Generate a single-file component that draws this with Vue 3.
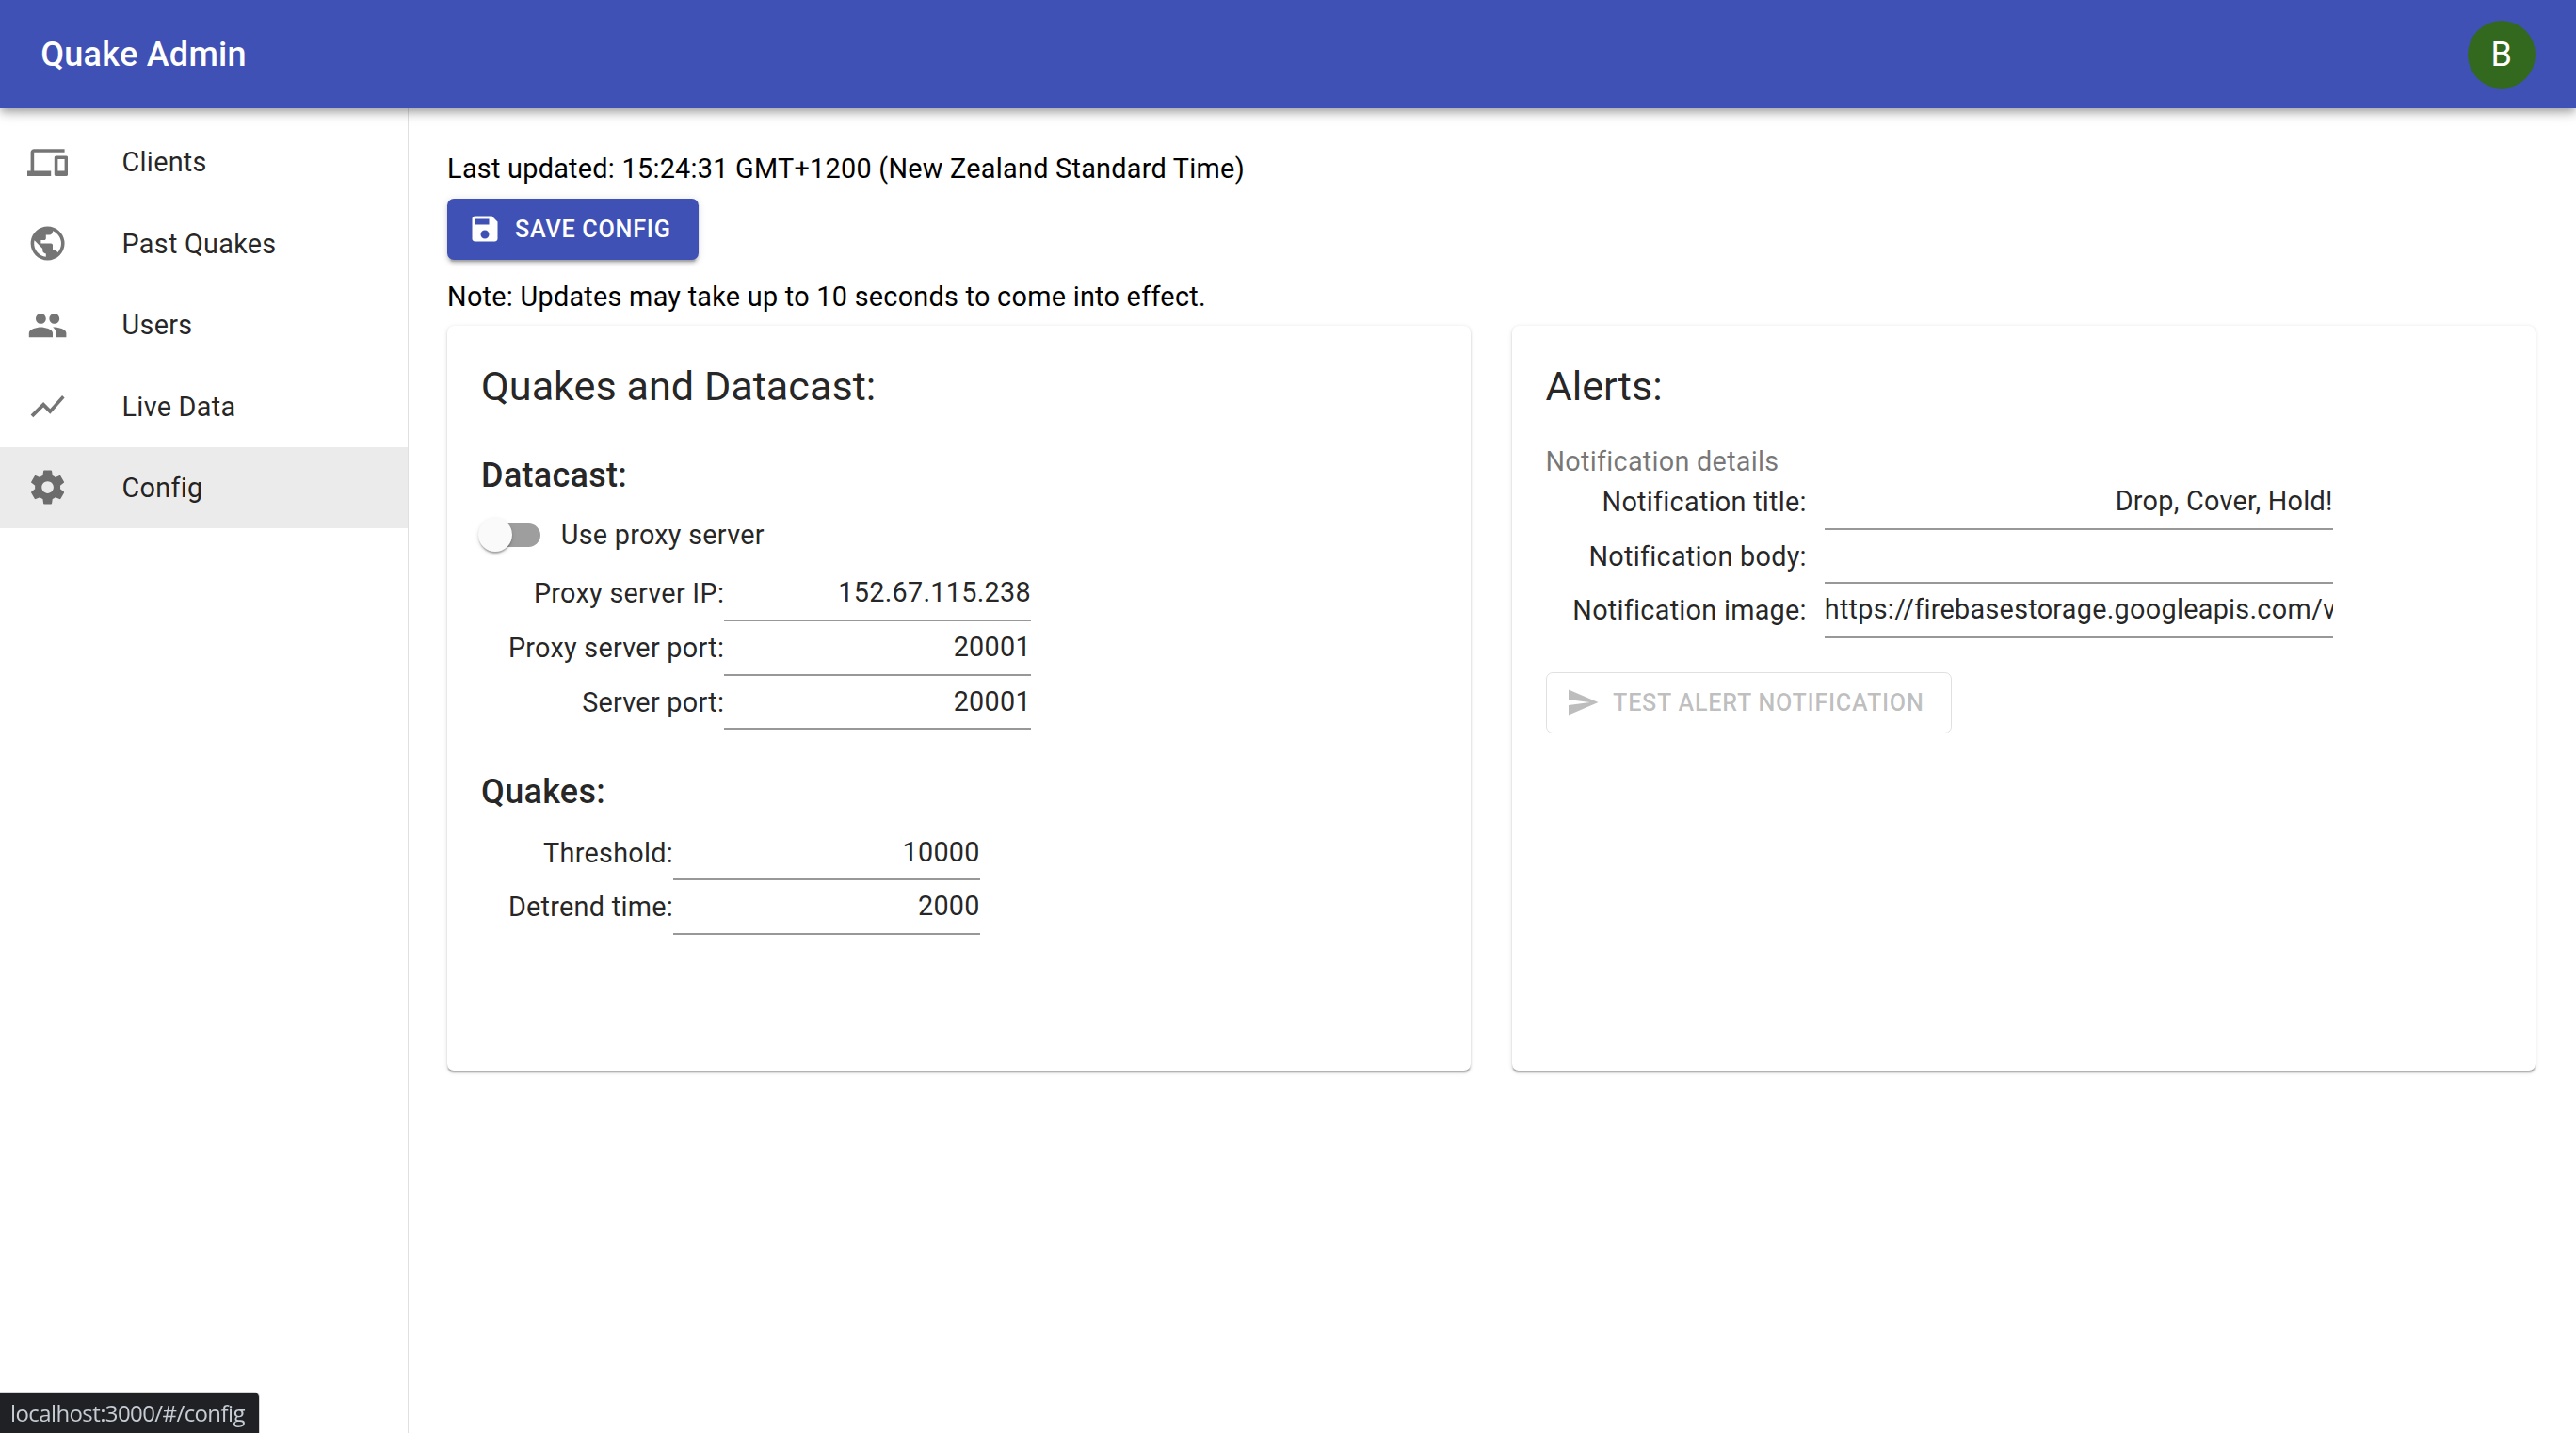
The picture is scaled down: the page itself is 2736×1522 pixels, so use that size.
<script setup>
const nav = [
  { label: 'Clients', d: 'M4 6h18V4H4c-1.1 0-2 .9-2 2v11H0v3h14v-3H4V6zm19 2h-6c-.55 0-1 .45-1 1v10c0 .55.45 1 1 1h6c.55 0 1-.45 1-1V9c0-.55-.45-1-1-1zm-1 9h-4v-7h4v7z' },
  { label: 'Past Quakes', d: 'M12 2C6.48 2 2 6.48 2 12s4.48 10 10 10 10-4.48 10-10S17.52 2 12 2zm-1 17.93c-3.95-.49-7-3.85-7-7.93 0-.62.08-1.21.21-1.79L9 15v1c0 1.1.9 2 2 2v1.93zm6.9-2.54c-.26-.81-1-1.39-1.9-1.39h-1v-3c0-.55-.45-1-1-1H8v-2h2c.55 0 1-.45 1-1V7h2c1.1 0 2-.9 2-2v-.41c2.93 1.19 5 4.06 5 7.41 0 2.08-.8 3.97-2.1 5.39z' },
  { label: 'Users', d: 'M16 11c1.66 0 2.99-1.34 2.99-3S17.66 5 16 5c-1.66 0-3 1.34-3 3s1.34 3 3 3zm-8 0c1.66 0 2.99-1.34 2.99-3S9.66 5 8 5C6.34 5 5 6.34 5 8s1.34 3 3 3zm0 2c-2.33 0-7 1.17-7 3.5V19h14v-2.5c0-2.33-4.67-3.5-7-3.5zm8 0c-.29 0-.62.02-.97.05 1.16.84 1.97 1.97 1.97 3.45V19h6v-2.5c0-2.33-4.67-3.5-7-3.5z' },
  { label: 'Live Data', d: 'M3.5 18.49l6-6.01 4 4L22 6.92l-1.41-1.41-7.09 7.97-4-4L2 16.99z' },
  { label: 'Config', active: true, d: 'M19.43 12.98c.04-.32.07-.64.07-.98s-.03-.66-.07-.98l2.11-1.65c.19-.15.24-.42.12-.64l-2-3.46c-.12-.22-.39-.3-.61-.22l-2.49 1c-.52-.4-1.08-.73-1.69-.98l-.38-2.65C14.46 2.18 14.25 2 14 2h-4c-.25 0-.46.18-.49.42l-.38 2.65c-.61.25-1.17.59-1.69.98l-2.49-1c-.23-.09-.49 0-.61.22l-2 3.46c-.13.22-.07.49.12.64l2.11 1.65c-.04.32-.07.65-.07.98s.03.66.07.98l-2.11 1.65c-.19.15-.24.42-.12.64l2 3.46c.12.22.39.3.61.22l2.49-1c.52.4 1.08.73 1.69.98l.38 2.65c.03.24.24.42.49.42h4c.25 0 .46-.18.49-.42l.38-2.65c.61-.25 1.17-.59 1.69-.98l2.49 1c.23.09.49 0 .61-.22l2-3.46c.12-.22.07-.49-.12-.64l-2.11-1.65zM12 15.5c-1.93 0-3.5-1.57-3.5-3.5s1.57-3.5 3.5-3.5 3.5 1.57 3.5 3.5-1.57 3.5-3.5 3.5z' }
]
const datacast = [
  { label: 'Proxy server IP:', value: '152.67.115.238' },
  { label: 'Proxy server port:', value: '20001' },
  { label: 'Server port:', value: '20001' }
]
const quakes = [
  { label: 'Threshold:', value: '10000' },
  { label: 'Detrend time:', value: '2000' }
]
const alerts = [
  { label: 'Notification title:', value: 'Drop, Cover, Hold!' },
  { label: 'Notification body:', value: '' },
  { label: 'Notification image:', value: 'https://firebasestorage.googleapis.com/v0' }
]
</script>

<template>
  <div class="app">
    <header class="appbar">
      <div class="brand">Quake Admin</div>
      <div class="avatar">B</div>
    </header>
    <div class="body">
      <nav class="drawer">
        <div v-for="item in nav" :key="item.label" class="nav-item" :class="{ active: item.active }">
          <svg class="nav-icon" viewBox="0 0 24 24"><path :d="item.d" /></svg>
          <span>{{ item.label }}</span>
        </div>
      </nav>
      <main class="main">
        <div class="plain">Last updated: 15:24:31 GMT+1200 (New Zealand Standard Time)</div>
        <div class="btn contained">
          <svg class="btn-icon" viewBox="0 0 24 24"><path d="M17 3H5c-1.11 0-2 .9-2 2v14c0 1.1.89 2 2 2h14c1.1 0 2-.9 2-2V7l-4-4zm-5 16c-1.66 0-3-1.34-3-3s1.34-3 3-3 3 1.34 3 3-1.34 3-3 3zm3-10H5V5h10v4z" /></svg>
          <span>Save Config</span>
        </div>
        <div class="plain note">Note: Updates may take up to 10 seconds to come into effect.</div>
        <div class="cards">
          <section class="card">
            <h2 class="card-title">Quakes and Datacast:</h2>
            <h3 class="sub">Datacast:</h3>
            <div class="switch-row">
              <div class="switch"><span class="track"></span><span class="thumb"></span></div>
              <span>Use proxy server</span>
            </div>
            <div class="fields">
              <template v-for="f in datacast" :key="f.label">
                <div class="f-label">{{ f.label }}</div>
                <div class="f-input">{{ f.value }}</div>
              </template>
            </div>
            <h3 class="sub quakes">Quakes:</h3>
            <div class="fields q-fields">
              <template v-for="f in quakes" :key="f.label">
                <div class="f-label">{{ f.label }}</div>
                <div class="f-input">{{ f.value }}</div>
              </template>
            </div>
          </section>
          <section class="card">
            <h2 class="card-title">Alerts:</h2>
            <div class="legend">Notification details</div>
            <div class="fields alert-fields">
              <template v-for="f in alerts" :key="f.label">
                <div class="f-label">{{ f.label }}</div>
                <div class="f-input">{{ f.value }}</div>
              </template>
            </div>
            <div class="btn outlined">
              <svg class="btn-icon" viewBox="0 0 24 24"><path d="M2.01 21L23 12 2.01 3 2 10l15 2-15 2z" /></svg>
              <span>Test Alert Notification</span>
            </div>
          </section>
        </div>
      </main>
    </div>
  </div>
  <div class="status">localhost:3000/#/config</div>
</template>

<style scoped>
.app {
  zoom: 1.8;
  width: 1520px;
  height: 845.55px;
  display: flex;
  flex-direction: column;
  overflow: hidden;
  font-family: Roboto, sans-serif;
  font-size: 16px;
  color: rgba(0, 0, 0, 0.87);
  background: #fff;
}
.appbar {
  height: 64px;
  flex: none;
  display: flex;
  align-items: center;
  justify-content: space-between;
  padding: 0 24px;
  background: #3f51b5;
  color: #fff;
  position: relative;
  z-index: 2;
  box-shadow: 0 2px 4px -1px rgba(0, 0, 0, 0.2), 0 4px 5px 0 rgba(0, 0, 0, 0.14), 0 1px 10px 0 rgba(0, 0, 0, 0.12);
}
.brand {
  font-size: 20px;
  font-weight: 500;
  letter-spacing: 0.0075em;
}
.avatar {
  width: 40px;
  height: 40px;
  border-radius: 50%;
  background: #33691e;
  display: flex;
  align-items: center;
  justify-content: center;
  font-size: 20px;
}
.body {
  flex: 1;
  display: flex;
  min-height: 0;
}
.drawer {
  width: 240.4px;
  flex: none;
  box-sizing: content-box;
  padding-top: 7.8px;
  border-right: 1px solid rgba(0, 0, 0, 0.12);
}
.nav-item {
  height: 48px;
  display: flex;
  align-items: center;
  padding: 0 16px;
  letter-spacing: 0.00938em;
}
.nav-item.active {
  background: rgba(0, 0, 0, 0.08);
}
.nav-icon {
  width: 24px;
  height: 24px;
  margin-right: 32px;
  flex: none;
  fill: rgba(0, 0, 0, 0.54);
}
.main {
  flex: 1;
  min-width: 0;
  padding: 24.3px 24px 0 23px;
}
.plain {
  color: #000;
  line-height: 1.43;
  letter-spacing: 0.00938em;
}
.note {
  margin-top: 10.5px;
}
.btn {
  box-sizing: border-box;
  height: 36px;
  display: inline-flex;
  align-items: center;
  border-radius: 4px;
  font-size: 14px;
  font-weight: 500;
  letter-spacing: 0.02857em;
  text-transform: uppercase;
}
.contained {
  display: flex;
  width: 148px;
  margin-top: 6px;
  padding: 0 16px 0 12px;
  background: #3f51b5;
  color: #fff;
  box-shadow: 0 3px 1px -2px rgba(0, 0, 0, 0.2), 0 2px 2px 0 rgba(0, 0, 0, 0.14), 0 1px 5px 0 rgba(0, 0, 0, 0.12);
}
.outlined {
  margin-top: 20px;
  padding: 0 15.6px 0 11.2px;
  border: 1px solid rgba(0, 0, 0, 0.12);
  color: rgba(0, 0, 0, 0.26);
}
.btn-icon {
  width: 20px;
  height: 20px;
  margin-right: 8px;
  fill: currentColor;
  flex: none;
}
.cards {
  display: grid;
  grid-template-columns: 1fr 1fr;
  gap: 24px;
  margin-top: 5.5px;
}
.card {
  box-sizing: border-box;
  height: 439.5px;
  padding: 20.7px 20px 20px;
  border-radius: 4px;
  background: #fff;
  box-shadow: 0 2px 1px -1px rgba(0, 0, 0, 0.2), 0 1px 1px 0 rgba(0, 0, 0, 0.14), 0 1px 3px 0 rgba(0, 0, 0, 0.12);
}
.card-title {
  margin: -0.3px 0 20.3px;
  font-size: 24px;
  font-weight: 400;
  line-height: 32px;
}
.sub {
  margin: 0 0 -1px;
  font-size: 20px;
  font-weight: 500;
  line-height: 33px;
  letter-spacing: 0.0075em;
}
.quakes {
  margin-top: 20.5px;
}
.switch-row {
  height: 38px;
  margin-left: -11px;
  display: flex;
  align-items: center;
  letter-spacing: 0.00938em;
}
.switch {
  width: 58px;
  height: 38px;
  position: relative;
  flex: none;
}
.track {
  position: absolute;
  left: 12px;
  top: 12px;
  width: 34px;
  height: 14px;
  border-radius: 7px;
  background: #000;
  opacity: 0.38;
}
.thumb {
  position: absolute;
  left: 9px;
  top: 9px;
  width: 20px;
  height: 20px;
  border-radius: 50%;
  background: #fafafa;
  box-shadow: 0 2px 1px -1px rgba(0, 0, 0, 0.2), 0 1px 1px 0 rgba(0, 0, 0, 0.14), 0 1px 3px 0 rgba(0, 0, 0, 0.12);
}
.fields {
  display: grid;
  grid-template-columns: max-content 181px;
  grid-auto-rows: 32px;
  justify-content: start;
  padding-left: 16px;
}
.q-fields {
  margin-top: 4.5px;
}
.alert-fields {
  grid-template-columns: max-content 300px;
  column-gap: 10.5px;
}
.f-label {
  line-height: 32px;
  text-align: right;
  letter-spacing: 0.00938em;
}
.f-input {
  box-sizing: border-box;
  height: 32px;
  line-height: 31px;
  text-align: right;
  white-space: nowrap;
  overflow: hidden;
  border-bottom: 1.2px solid #989898;
  letter-spacing: 0.00938em;
}
.legend {
  font-size: 16px;
  line-height: 16px;
  color: rgba(0, 0, 0, 0.54);
  letter-spacing: 0.00938em;
}
.status {
  position: fixed;
  left: 0;
  bottom: 0;
  height: 43px;
  width: 275px;
  box-sizing: border-box;
  padding-left: 11px;
  line-height: 43px;
  border-top-right-radius: 5px;
  background: #202124;
  color: #c5ccd4;
  font-family: "Open Sans", sans-serif;
  font-size: 24px;
  letter-spacing: -0.6px;
  white-space: nowrap;
  box-shadow: 0 -1px 0 #d4d4d4, 1px 0 0 #d4d4d4;
}
</style>

<style>
html, body { margin: 0; background: #fff; overflow: hidden; }
</style>
